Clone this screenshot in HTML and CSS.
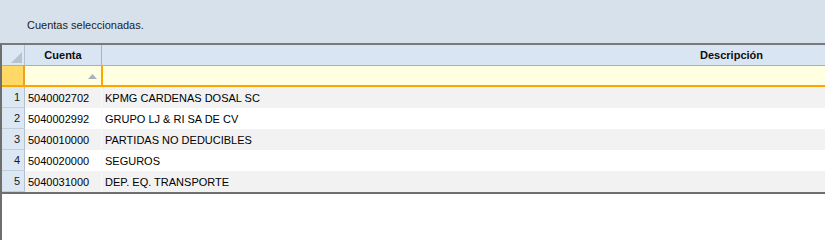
FILE: index.html
```html
<!DOCTYPE html>
<html lang="es">
<head>
    <meta charset="UTF-8">
    <title>Cuentas seleccionadas</title>
    <link rel="stylesheet" href="styles.css">
</head>
<body>
    <div class="panel">
        <span class="panel_text">Cuentas seleccionadas.</span>
    </div>
    <div class="grid">
        <div class="row head">
            <div class="ind corner">
                <svg width="11" height="11" viewBox="0 0 11 11"><polygon points="11,0 11,11 0,11" fill="#b9c3cf"/></svg>
            </div>
            <div class="cell c1">Cuenta</div>
            <div class="cell c2 head_desc">Descripción</div>
        </div>
        <div class="row filter">
            <div class="ind filter_ind"></div>
            <div class="cell c1 filter_c1">
                <svg class="sort" width="9" height="5" viewBox="0 0 9 5"><polygon points="4.5,0 9,5 0,5" fill="#a9b1ba"/></svg>
            </div>
            <div class="cell c2"></div>
        </div>
        <div class="rows">
            <div class="row data odd">
                <div class="ind">1</div>
                <div class="cell c1">5040002702</div>
                <div class="cell c2">KPMG CARDENAS DOSAL SC</div>
            </div>
            <div class="row data">
                <div class="ind">2</div>
                <div class="cell c1">5040002992</div>
                <div class="cell c2">GRUPO LJ &amp; RI SA DE CV</div>
            </div>
            <div class="row data odd">
                <div class="ind">3</div>
                <div class="cell c1">5040010000</div>
                <div class="cell c2">PARTIDAS NO DEDUCIBLES</div>
            </div>
            <div class="row data">
                <div class="ind">4</div>
                <div class="cell c1">5040020000</div>
                <div class="cell c2">SEGUROS</div>
            </div>
            <div class="row data odd">
                <div class="ind">5</div>
                <div class="cell c1">5040031000</div>
                <div class="cell c2">DEP. EQ. TRANSPORTE</div>
            </div>
        </div>
    </div>
</body>
</html>
```
FILE: styles.css
```css
body
{
    margin: 0;
    background-color: #ffffff;
    font-family: 'Liberation Sans', Arial, sans-serif;
    font-size: 11px;
    color: #000000;
    overflow: hidden;
}
.panel
{
    height: 43px;
    background-color: #d7e1ec;
    display: flex;
    align-items: center;
    padding-left: 27px;
    padding-top: 7px;
    box-sizing: border-box;
}
.panel_text
{
    font-size: 11px;
    color: #1b1b1b;
}
.grid
{
    height: 197px;
    border-left: 2px solid #6f6f6f;
    border-top: 2px solid #7a7a7a;
    box-sizing: border-box;
}
.row
{
    display: flex;
    height: 21px;
    box-sizing: border-box;
}
.cell
{
    display: flex;
    align-items: center;
    padding-left: 3px;
    box-sizing: border-box;
    white-space: nowrap;
}
.ind
{
    width: 23px;
    flex: none;
    display: flex;
    align-items: center;
    justify-content: flex-end;
    padding-right: 4px;
    box-sizing: border-box;
    background-color: #dce7f4;
    border-right: 1px solid #b3c0cf;
    border-bottom: 1px solid #c3cedb;
    color: #1a1a1a;
}
.c1
{
    width: 77px;
    flex: none;
    border-right: 1px solid #f9f9f9;
}
.c2
{
    flex: 1;
}
.head
{
    height: 21px;
    background-color: #d9e5f3;
    border-bottom: 1px solid #a7afba;
    font-weight: bold;
    color: #0d0d0d;
}
.head .cell
{
    justify-content: center;
    padding-left: 0;
}
.head .c1
{
    border-right: 1px solid #a7b3c2;
}
.head .head_desc
{
    justify-content: flex-end;
    padding-right: 62px;
}
.corner
{
    align-items: flex-end;
    padding-right: 2px;
    padding-bottom: 2px;
    border-bottom: none;
}
.filter
{
    height: 21px;
    background-color: #ffffe1;
    border-bottom: 2px solid #ffa500;
}
.filter_ind
{
    background-color: #ffd966;
    border-right: 2px solid #f0a020;
    border-bottom: none;
}
.filter_c1
{
    width: 78px;
    justify-content: flex-end;
    align-items: center;
    padding-right: 4px;
    border-right: 2px solid #ffa500;
}
.sort
{
    margin-top: 1px;
}
.rows
{
    border-bottom: 2px solid #6f6f6f;
}
.data
{
    background-color: #ffffff;
}
.odd
{
    background-color: #f2f2f2;
}
```
